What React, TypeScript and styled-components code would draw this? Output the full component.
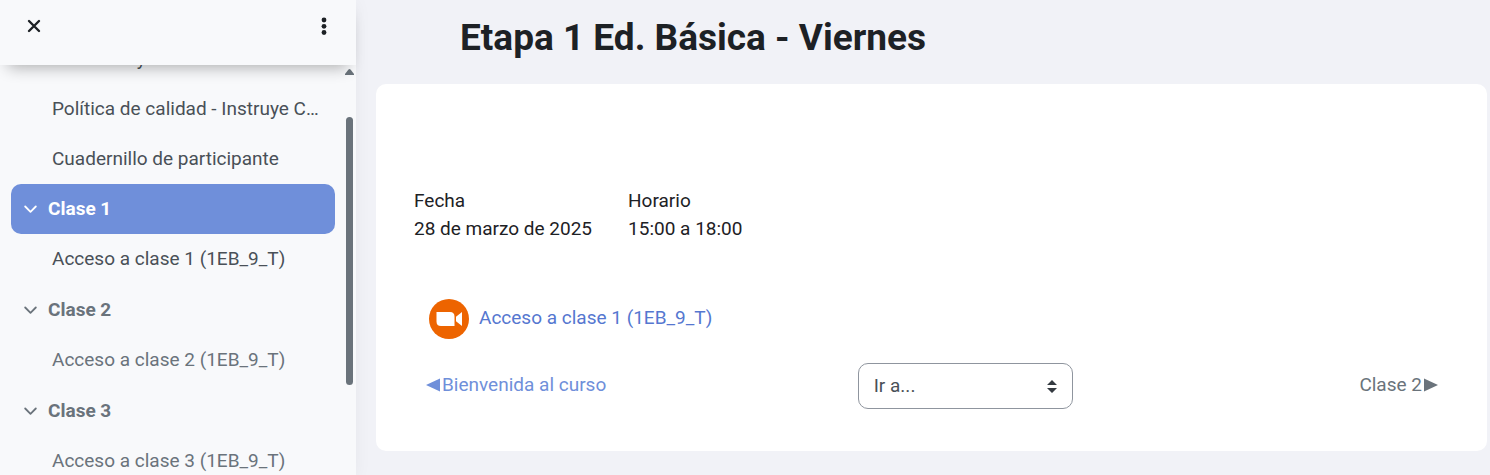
import React from "react";
import styled, { createGlobalStyle } from "styled-components";

const GlobalStyle = createGlobalStyle`
  *, *::before, *::after { box-sizing: border-box; }
  body {
    margin: 0;
    background: #f1f2f7;
    color: #1d2125;
    font-family: Roboto, "Liberation Sans", sans-serif;
    font-size: 19px;
    line-height: 28px;
  }
  a { text-decoration: none; }
`;

const Page = styled.div`
  display: flex;
  height: 100vh;
  overflow: hidden;
`;

const Drawer = styled.aside`
  display: flex;
  flex-direction: column;
  flex: 0 0 356px;
  min-width: 0;
  background: #f8f9fb;
  box-shadow: 0 2px 16px rgba(0, 0, 0, 0.05);
`;

const DrawerHeader = styled.header`
  display: flex;
  flex: 0 0 65px;
  align-items: flex-start;
  justify-content: space-between;
  padding: 11px 17px 0 19px;
  background: #f8f9fb;
  box-shadow: 0 10px 16px -8px rgba(0, 0, 0, 0.32);
  z-index: 1;
`;

const IconButton = styled.button`
  display: grid;
  place-items: center;
  width: 30px;
  height: 30px;
  padding: 0;
  border: 0;
  background: transparent;
  color: #1d2125;
`;

const DrawerBody = styled.div`
  display: flex;
  flex: 1;
  min-height: 0;
  overflow: hidden;
`;

const CourseIndex = styled.nav`
  flex: 1;
  min-width: 0;
  margin-top: -31px;
  padding-left: 11px;
`;

const List = styled.ul`
  margin: 0;
  padding: 0;
  list-style: none;
`;

const SectionList = styled(List)`
  margin-bottom: 1px;
`;

const ItemLink = styled.a<{ $muted?: boolean }>`
  display: block;
  padding: 11px 16px 11px 41px;
  overflow: hidden;
  white-space: nowrap;
  text-overflow: ellipsis;
  color: ${(p) => (p.$muted ? "#6a737b" : "#495057")};
`;

const SectionRow = styled.div<{ $active?: boolean }>`
  display: flex;
  align-items: center;
  gap: 10px;
  padding: 11px 12px;
  border-radius: 10px;
  background: ${(p) => (p.$active ? "#6f8fda" : "transparent")};
  color: ${(p) => (p.$active ? "#fff" : "#6a737b")};
`;

const ToggleButton = styled.button`
  display: grid;
  place-items: center;
  width: 15px;
  height: 28px;
  padding: 0;
  border: 0;
  background: transparent;
  color: inherit;
`;

const SectionLink = styled.a`
  color: inherit;
  font-weight: 700;
`;

const ScrollTrack = styled.div`
  display: flex;
  flex: 0 0 21px;
  flex-direction: column;
  align-items: center;
  padding: 4px 0 0 8px;
`;

const ScrollThumb = styled.div`
  width: 7px;
  height: 66%;
  margin-top: 42px;
  border-radius: 4px;
  background: #6a737b;
`;

const Main = styled.main`
  flex: 1;
  min-width: 0;
  padding: 15px 3px 24px 20px;
`;

const Title = styled.h1`
  margin: 0 0 23px;
  padding-left: 84px;
  font-size: 37px;
  line-height: 46px;
  font-weight: 700;
`;

const Card = styled.section`
  padding: 103px 38px 42px;
  border-radius: 10px;
  background: #fff;
`;

const Details = styled.dl`
  display: flex;
  gap: 36px;
  margin: 0;
`;

const Detail = styled.div`
  dt, dd { margin: 0; }
`;

const Activity = styled.div`
  display: flex;
  align-items: center;
  gap: 10px;
  margin-top: 56px;
  padding-left: 15px;
`;

const ActivityLink = styled.a`
  padding-bottom: 2px;
  color: #5577d0;
`;

const Pager = styled.nav`
  display: grid;
  grid-template-columns: 13fr 215px 11fr;
  align-items: center;
  margin-top: 24px;
  padding: 0 11px 0 12px;
`;

const PagerLink = styled.a<{ $next?: boolean }>`
  display: flex;
  align-items: center;
  gap: 2px;
  justify-self: ${(p) => (p.$next ? "end" : "start")};
  padding-bottom: 3px;
  color: ${(p) => (p.$next ? "#6a737b" : "#6f8fda")};
`;

const SelectBox = styled.div`
  display: grid;
  align-items: center;

  > * { grid-area: 1 / 1; }
  svg {
    justify-self: end;
    margin-right: 16px;
    pointer-events: none;
  }
`;

const Select = styled.select`
  width: 100%;
  height: 46px;
  padding: 0 36px 0 15px;
  border: 1px solid #8f959e;
  border-radius: 10px;
  appearance: none;
  background: #fff;
  color: #495057;
  font: inherit;
`;

const Chevron = () => (
  <svg width="13" height="9" viewBox="0 0 13 9" fill="none" stroke="currentColor" strokeWidth="1.8" strokeLinecap="round" strokeLinejoin="round" aria-hidden>
    <path d="M1.2 1.5 6.5 6.8l5.3-5.3" />
  </svg>
);

const Arrow = ({ next }: { next?: boolean }) => (
  <svg width="14" height="14" viewBox="0 0 14 14" fill="currentColor" aria-hidden>
    <path d={next ? "M0 .5 14 7 0 13.500Z" : "M14 .5 0 7l14 6.500Z"} />
  </svg>
);

const sections = [
  { title: "Clase 1", item: "Acceso a clase 1 (1EB_9_T)", active: true },
  { title: "Clase 2", item: "Acceso a clase 2 (1EB_9_T)", active: false },
  { title: "Clase 3", item: "Acceso a clase 3 (1EB_9_T)", active: false },
];

const documents = [
  "Derechos y deberes",
  "Política de calidad - Instruye Capacitación",
  "Cuadernillo de participante",
];

export default function App() {
  return (
    <>
      <GlobalStyle />
      <Page>
        <Drawer>
          <DrawerHeader>
            <IconButton type="button" aria-label="Cerrar índice del curso">
              <svg width="14" height="14" viewBox="0 0 14 14" stroke="currentColor" strokeWidth="2.4" strokeLinecap="round" aria-hidden>
                <path d="m2 2 10 10M12 2 2 12" />
              </svg>
            </IconButton>
            <IconButton type="button" aria-label="Opciones del índice">
              <svg width="6" height="18" viewBox="0 0 6 18" fill="currentColor" aria-hidden>
                <circle cx="3" cy="3" r="2.400" />
                <circle cx="3" cy="9.300" r="2.400" />
                <circle cx="3" cy="15.500" r="2.400" />
              </svg>
            </IconButton>
          </DrawerHeader>
          <DrawerBody>
            <CourseIndex aria-label="Índice del curso">
              <List>
                {documents.map((name) => (
                  <li key={name}>
                    <ItemLink href="#">{name}</ItemLink>
                  </li>
                ))}
                {sections.map((s) => (
                  <li key={s.title}>
                    <SectionRow $active={s.active}>
                      <ToggleButton type="button" aria-label={`Contraer ${s.title}`} aria-expanded>
                        <Chevron />
                      </ToggleButton>
                      <SectionLink href="#">{s.title}</SectionLink>
                    </SectionRow>
                    <SectionList>
                      <li>
                        <ItemLink href="#" $muted={!s.active}>{s.item}</ItemLink>
                      </li>
                    </SectionList>
                  </li>
                ))}
              </List>
            </CourseIndex>
            <ScrollTrack aria-hidden>
              <svg width="9" height="6" viewBox="0 0 9 6" fill="#6a737b">
                <path d="M3.500.6Q4.500-.4 5.500.6L9 5v1H0V5Z" />
              </svg>
              <ScrollThumb />
            </ScrollTrack>
          </DrawerBody>
        </Drawer>
        <Main>
          <Title>Etapa 1 Ed. Básica - Viernes</Title>
          <Card>
            <Details>
              <Detail>
                <dt>Fecha</dt>
                <dd>28 de marzo de 2025</dd>
              </Detail>
              <Detail>
                <dt>Horario</dt>
                <dd>15:00 a 18:00</dd>
              </Detail>
            </Details>
            <Activity>
              <svg width="40" height="40" viewBox="0 0 40 40" aria-hidden>
                <circle cx="20" cy="20" r="20" fill="#ed6400" />
                <path d="M7.500 13H21Q25.500 13 25.500 17.500V27H12Q7.500 27 7.500 22.500ZM27 17.800 33 13v14l-6-4.800Z" fill="#fff" />
              </svg>
              <ActivityLink href="#">Acceso a clase 1 (1EB_9_T)</ActivityLink>
            </Activity>
            <Pager aria-label="Navegación entre actividades">
              <PagerLink href="#">
                <Arrow />
                Bienvenida al curso
              </PagerLink>
              <SelectBox>
                <Select aria-label="Ir a..." defaultValue="">
                  <option value="">Ir a...</option>
                </Select>
                <svg width="10" height="13" viewBox="0 0 10 13" fill="#343a40" aria-hidden>
                  <path d="M0 5 5 0l5 5ZM0 8h10l-5 5Z" />
                </svg>
              </SelectBox>
              <PagerLink href="#" $next>
                Clase 2
                <Arrow next />
              </PagerLink>
            </Pager>
          </Card>
        </Main>
      </Page>
    </>
  );
}
